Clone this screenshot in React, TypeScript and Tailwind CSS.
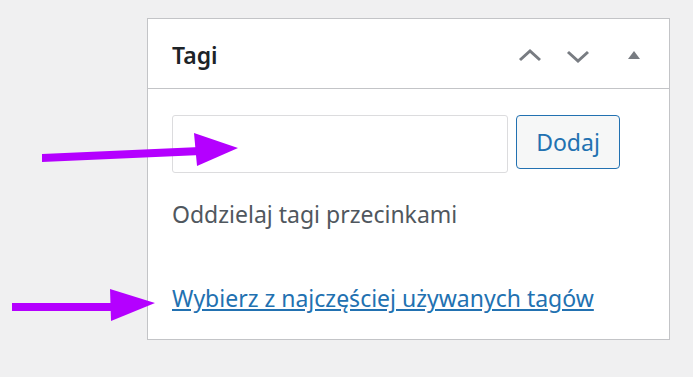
import React from "react";

export default function App() {
  const font = { fontFamily: '"Noto Sans", "Open Sans", sans-serif' };
  return (
    <div className="relative w-[693px] h-[377px] bg-[#f0f0f1] overflow-hidden" style={font}>
      <div className="pt-[18px] pl-[147px]">
        <div className="w-[523px] h-[322px] bg-white border border-[#c3c4c7] flex flex-col">
          <div className="h-[70px] border-b border-[#c3c4c7] flex items-center pl-[24px] pr-[28px]">
            <h2 className="text-[23px] font-semibold text-[#1d2327] flex-1 leading-[30px] mt-[3px]">Tagi</h2>
            <div className="flex items-center mt-[5px]">
              <svg width="28" height="20" viewBox="0 0 28 20" className="mr-[20px]">
                <path d="M3 14 L13 5 L23 14" fill="none" stroke="#787c82" strokeWidth="3" />
              </svg>
              <svg width="28" height="20" viewBox="0 0 28 20" className="mr-[34px]">
                <path d="M3 6 L13 15 L23 6" fill="none" stroke="#787c82" strokeWidth="3" />
              </svg>
              <svg width="14" height="20" viewBox="0 0 14 20">
                <path d="M1 13 L7 5 L13 13 Z" fill="#787c82" />
              </svg>
            </div>
          </div>
          <div className="flex flex-col pl-[24px] pt-[26px]">
            <div className="flex items-start gap-[8px]">
              <input
                type="text"
                className="w-[336px] h-[58px] border border-[#dcdcde] rounded-[3px] bg-white outline-none"
              />
              <button className="w-[104px] h-[54px] border border-[#2271b1] rounded-[4px] bg-[#f6f7f7] text-[#2271b1] text-[23px] leading-[30px]">
                Dodaj
              </button>
            </div>
            <p className="mt-[26px] text-[23px] text-[#50575e] leading-[30px]">Oddzielaj tagi przecinkami</p>
            <a href="#" className="mt-[54px] text-[23px] text-[#2271b1] underline leading-[30px] w-fit">
              Wybierz z najczęściej używanych tagów
            </a>
          </div>
        </div>
      </div>
      <svg className="absolute left-0 top-0 pointer-events-none" width="693" height="377" viewBox="0 0 693 377">
        <path d="M42 154 L200 147 L201 155 L42 162 Z" fill="#b400ff" />
        <path d="M194 133 L238 148 L197 166 Z" fill="#b400ff" />
        <path d="M12 303 L118 303 L118 311 L12 311 Z" fill="#b400ff" />
        <path d="M110 289 L155 303 L111 321 Z" fill="#b400ff" />
      </svg>
    </div>
  );
}
